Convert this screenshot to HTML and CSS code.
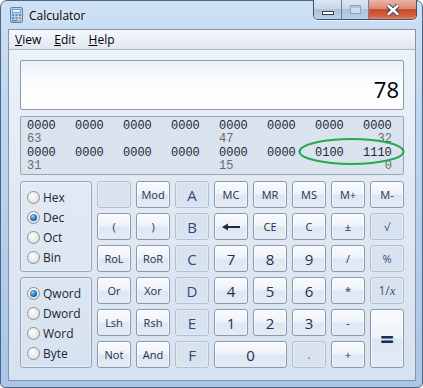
FILE: index.html
```html
<!DOCTYPE html>
<html lang="en">
<head>
  <meta charset="UTF-8" />
  <title>Calculator</title>
  <link rel="stylesheet" href="styles.css">
</head>
<body>

  <div class="window">
    <div class="titlebar">
      <svg class="app-icon" width="13" height="16" viewBox="0 0 13 16">
        <rect x="0.5" y="0.5" width="12" height="15" rx="1.5" fill="#b8d2ee" stroke="#5a82b0" />
        <rect x="2.5" y="2.5" width="8" height="3" fill="#eef6fd" stroke="#7d9fc7" />
        <rect x="2" y="7" width="2" height="2" fill="#5f8cc2" />
        <rect x="5.5" y="7" width="2" height="2" fill="#5f8cc2" />
        <rect x="9" y="7" width="2" height="2" fill="#5f8cc2" />
        <rect x="2" y="10" width="2" height="2" fill="#5f8cc2" />
        <rect x="5.5" y="10" width="2" height="2" fill="#5f8cc2" />
        <rect x="9" y="10" width="2" height="2" fill="#e0903a" />
        <rect x="2" y="13" width="5.5" height="1.5" fill="#5f8cc2" />
        <rect x="9" y="13" width="2" height="1.5" fill="#e0903a" />
      </svg>
      <span class="title">Calculator</span>
      <div class="caption">
        <span class="cap-btn cap-min"><span class="min-glyph"></span></span>
        <span class="cap-btn cap-max"><span class="max-glyph"></span></span>
        <span class="cap-btn cap-close">
          <svg width="14" height="12" viewBox="0 0 14 12">
            <path d="M2 1.5 L12 10.5 M12 1.5 L2 10.5" stroke="#3a4250" stroke-width="4.4" />
            <path d="M2 1.5 L12 10.5 M12 1.5 L2 10.5" stroke="#fff" stroke-width="2.4" />
          </svg>
        </span>
      </div>
    </div>

    <div class="client">
      <div class="menu">
        <span><u>V</u>iew</span>
        <span><u>E</u>dit</span>
        <span><u>H</u>elp</span>
      </div>

      <div class="content">
        <div class="display">78</div>

        <div class="bits">
          <div class="bit-row">
            <span>0000</span><span>0000</span><span>0000</span><span>0000</span>
            <span>0000</span><span>0000</span><span>0000</span><span>0000</span>
          </div>
          <div class="bit-row labels">
            <span>63</span><span class="c5">47</span><span class="c8">32</span>
          </div>
          <div class="bit-row second">
            <span>0000</span><span>0000</span><span>0000</span><span>0000</span>
            <span>0000</span><span>0000</span><span>0100</span><span>1110</span>
          </div>
          <div class="bit-row labels">
            <span>31</span><span class="c5">15</span><span class="c8">0</span>
          </div>
          <svg class="mark" width="112" height="30" viewBox="0 0 112 30">
            <ellipse cx="55.5" cy="14.5" rx="52" ry="12.5" fill="none" stroke="#22aa4c" stroke-width="2" />
          </svg>
        </div>

        <div class="keypad">
          <div class="radios">
            <div class="group">
              <div class="opt"><span class="radio"></span>Hex</div>
              <div class="opt"><span class="radio on"></span>Dec</div>
              <div class="opt"><span class="radio"></span>Oct</div>
              <div class="opt"><span class="radio"></span>Bin</div>
            </div>
            <div class="group">
              <div class="opt"><span class="radio on"></span>Qword</div>
              <div class="opt"><span class="radio"></span>Dword</div>
              <div class="opt"><span class="radio"></span>Word</div>
              <div class="opt"><span class="radio"></span>Byte</div>
            </div>
          </div>

          <div class="keys">
            <button class="key off"></button>
            <button class="key">Mod</button>
            <button class="key off big">A</button>
            <button class="key">MC</button>
            <button class="key">MR</button>
            <button class="key">MS</button>
            <button class="key">M+</button>
            <button class="key">M-</button>

            <button class="key">(</button>
            <button class="key">)</button>
            <button class="key off big">B</button>
            <button class="key">
              <svg width="18" height="8" viewBox="0 0 18 8">
                <path d="M0 4 L6 0.5 L6 7.5 Z" fill="#1e2a3c" />
                <rect x="5" y="3" width="13" height="2" fill="#1e2a3c" />
              </svg>
            </button>
            <button class="key">CE</button>
            <button class="key">C</button>
            <button class="key">±</button>
            <button class="key off">√</button>

            <button class="key">RoL</button>
            <button class="key">RoR</button>
            <button class="key off big">C</button>
            <button class="key big">7</button>
            <button class="key big">8</button>
            <button class="key big">9</button>
            <button class="key">/</button>
            <button class="key off">%</button>

            <button class="key">Or</button>
            <button class="key">Xor</button>
            <button class="key off big">D</button>
            <button class="key big">4</button>
            <button class="key big">5</button>
            <button class="key big">6</button>
            <button class="key">*</button>
            <button class="key off inv">1/<i>x</i></button>

            <button class="key">Lsh</button>
            <button class="key">Rsh</button>
            <button class="key off big">E</button>
            <button class="key big">1</button>
            <button class="key big">2</button>
            <button class="key big">3</button>
            <button class="key">-</button>
            <button class="key equals">=</button>

            <button class="key">Not</button>
            <button class="key">And</button>
            <button class="key off big">F</button>
            <button class="key big zero">0</button>
            <button class="key off">.</button>
            <button class="key">+</button>
          </div>
        </div>
      </div>
    </div>
  </div>

</body>
</html>
```

FILE: styles.css
```css
* {
  margin: 0;
  padding: 0;
  box-sizing: border-box;
}

body {
  font-family: "Open Sans", "Segoe UI", "DejaVu Sans", sans-serif;
  background: #ffffff;
}

.window {
  width: 423px;
  height: 388px;
  border: 1px solid #4d6482;
  border-radius: 7px 7px 5px 5px;
  background: linear-gradient(#cde0f4, #bed6ef 30%, #a9c6e7);
  padding: 0 6px 6px 7px;
  display: flex;
  flex-direction: column;
}

/* title bar */
.titlebar {
  height: 28px;
  display: flex;
  align-items: center;
  flex-shrink: 0;
}

.app-icon {
  margin: 0 6px 0 2px;
}

.title {
  font-size: 12px;
  color: #000;
  text-shadow: 0 0 6px rgba(255, 255, 255, 0.95);
}

.caption {
  margin-left: auto;
  margin-top: -1px;
  margin-right: -1px;
  align-self: flex-start;
  display: flex;
  height: 20px;
  border: 1px solid #3c5372;
  border-top: none;
  border-radius: 0 0 5px 5px;
  overflow: hidden;
  box-shadow: 0 1px 0 rgba(255, 255, 255, 0.6);
}

.cap-btn {
  display: flex;
  justify-content: center;
  background: linear-gradient(#dce7f3, #c8d7e9 45%, #adc1d9 50%, #bccfe5);
  border-left: 1px solid #6c82a0;
}

.cap-btn:first-child {
  border-left: none;
}

.cap-min {
  width: 27px;
  padding-top: 11px;
}

.cap-max {
  width: 27px;
  padding-top: 5px;
}

.cap-close {
  width: 48px;
  padding-top: 4px;
  background: linear-gradient(#ecb4a6, #dc8a76 45%, #c84a30 50%, #d3603f 85%, #e48a6a);
}

.min-glyph {
  width: 12px;
  height: 4px;
  background: #fff;
  border: 1px solid #2e3f55;
}

.max-glyph {
  width: 11px;
  height: 9px;
  border: 1px solid #8ea1ba;
  background: #d2deec;
  box-shadow: inset 0 2px 0 #b3c4d9;
}

/* client area */
.client {
  flex: 1;
  border: 1px solid #8394ac;
  background: linear-gradient(#eef3fa, #e2eaf4 40%, #d7e2f0);
  display: flex;
  flex-direction: column;
}

.menu {
  height: 20px;
  border-bottom: 1px solid #a9b6c8;
  background: linear-gradient(#f7f9fc, #e0e7f1);
  display: flex;
  gap: 13px;
  padding-left: 6px;
  font-size: 12px;
  line-height: 19px;
  color: #000;
}

.menu u {
  text-underline-offset: 1px;
}

.content {
  padding: 10px 11px 0;
}

.display {
  height: 50px;
  border: 1px solid #8e9cb1;
  border-radius: 2px;
  background: linear-gradient(#eaf0f7, #fbfcfe 40%, #ffffff);
  display: flex;
  align-items: flex-end;
  justify-content: flex-end;
  padding: 0 4px 9px 0;
  font-size: 22px;
  line-height: 22px;
  color: #000;
}

/* binary panel */
.bits {
  position: relative;
  margin-top: 6px;
  height: 59px;
  border: 1px solid #98a6ba;
  border-radius: 2px;
  background: #dae3ee;
  padding: 3px 0 0 6px;
  font-family: "Liberation Mono", "DejaVu Sans Mono", monospace;
  font-size: 12px;
  line-height: 13px;
  color: #1c2636;
}

.bit-row {
  display: grid;
  grid-template-columns: repeat(7, 48px) 29px;
}

.bit-row.second {
  margin-top: 1px;
}

.bit-row.labels {
  color: #6b6b6b;
}

.c5 {
  grid-column: 5;
}

.c8 {
  grid-column: 8;
  justify-self: end;
}

.mark {
  position: absolute;
  left: 275px;
  top: 20px;
  overflow: visible;
}

/* keypad */
.keypad {
  margin-top: 6px;
  display: flex;
  gap: 5px;
}

.radios {
  width: 72px;
  display: flex;
  flex-direction: column;
  gap: 5px;
}

.group {
  height: 91px;
  border: 1px solid #96a4b9;
  border-radius: 3px;
  padding: 5px 0 0 6px;
  box-shadow: inset 0 0 0 1px rgba(255, 255, 255, 0.35);
}

.opt {
  height: 20px;
  display: flex;
  align-items: center;
  gap: 2px;
  font-size: 12px;
  color: #1b2636;
}

.radio {
  width: 13px;
  height: 13px;
  border-radius: 50%;
  border: 1px solid #8d8f92;
  background: radial-gradient(circle at 40% 35%, #ffffff, #ebebeb 50%, #cfd0d2);
  display: flex;
  align-items: center;
  justify-content: center;
  margin-right: 1px;
}

.radio.on::after {
  content: "";
  width: 7px;
  height: 7px;
  border-radius: 50%;
  background: radial-gradient(circle at 40% 35%, #8fd0fa, #1e6fb8 55%, #0c3d70);
}

.keys {
  display: grid;
  grid-template-columns: repeat(8, 34px);
  grid-template-rows: repeat(6, 27px);
  gap: 5px;
}

.key {
  font-family: "Open Sans", "Segoe UI", "DejaVu Sans", sans-serif;
  font-size: 11px;
  color: #1e3050;
  border: 1px solid #8b99af;
  border-radius: 3px;
  background: linear-gradient(#f8fafd, #eef3f9 48%, #dde6f1 52%, #e4ebf5);
  box-shadow: inset 0 1px 0 #ffffff, inset 1px 0 0 rgba(255, 255, 255, 0.6), inset -1px 0 0 rgba(255, 255, 255, 0.6);
  display: flex;
  align-items: center;
  justify-content: center;
  padding: 0;
}

.key.off {
  background: #d9e3ef;
  border-color: #b3c0d2;
  box-shadow: inset 0 0 0 1px rgba(255, 255, 255, 0.25);
  color: #33497a;
}

.key.big {
  font-size: 15px;
}

.key.inv {
  font-size: 12px;
  color: #3d5072;
}

.key.inv i {
  font-family: "Liberation Serif", serif;
  font-size: 13px;
}

.key.zero {
  grid-column: span 2;
}

.key.equals {
  grid-row: span 2;
  font-size: 24px;
  font-weight: 700;
}
```
